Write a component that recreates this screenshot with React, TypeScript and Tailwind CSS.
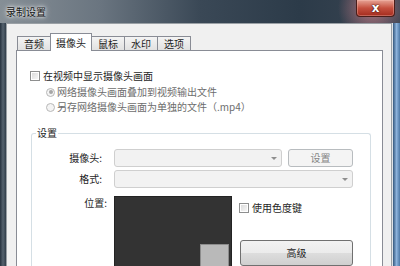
const font = "font-['Microsoft_YaHei','Noto_Sans_CJK_SC','Noto_Sans',sans-serif]";

function Checkbox() {
  return (
    <span className="flex h-[10px] w-[10px] shrink-0 items-center justify-center border border-[#8e8f8f] bg-white">
      <span className="h-[6px] w-[6px] bg-linear-to-br from-[#dcdcdc] to-[#f6f6f6]" />
    </span>
  );
}

function Radio({ checked }: { checked?: boolean }) {
  return (
    <span className="flex h-[9px] w-[9px] shrink-0 items-center justify-center rounded-full border border-[#b8b8b8] bg-[#f4f4f4]">
      {checked && <span className="h-[4px] w-[4px] rounded-full bg-[#a6a6a6]" />}
    </span>
  );
}

function Combo({ width }: { width: string }) {
  return (
    <div
      className={`flex h-[18px] ${width} items-center justify-end rounded-[3px] border border-[#cfcfcf] bg-[#f2f2f2] pr-[4px]`}
    >
      <span className="h-0 w-0 border-x-[3px] border-t-[3px] border-x-transparent border-t-[#8e8e8e]" />
    </div>
  );
}

const tabs = [
  { label: "音频", w: "w-[34px]" },
  { label: "摄像头", w: "w-[42px]", active: true },
  { label: "鼠标", w: "w-[34px]" },
  { label: "水印", w: "w-[34px]" },
  { label: "选项", w: "w-[34px]" },
];

export default function App() {
  return (
    <div className={`flex h-[266px] w-[400px] flex-col overflow-hidden text-[10px] leading-[14px] text-[#1e1e1e] ${font}`}>
      {/* title bar */}
      <div className="flex h-[23px] shrink-0 items-start justify-between bg-[radial-gradient(circle_at_372px_8px,rgba(214,130,140,0.75),rgba(214,130,140,0)_34px),linear-gradient(to_right,#868f96,#6a7580_25%,#3a4856_50%,#2c3b49_75%,#3a4552)]">
        <span className="mt-[5px] ml-[6px] text-[10px] text-[#151515] [text-shadow:0_0_6px_#ffffff,0_0_3px_#ffffff]">
          录制设置
        </span>
        <div className="mr-[5px] flex h-[17px] w-[39px] items-center justify-center rounded-b-[4px] border border-t-0 border-[#4a1e1a] bg-linear-to-b from-[#e6a396] via-[#c5503f] to-[#a32a1d] shadow-[inset_0_0_0_1px_rgba(255,200,190,0.35)]">
          <span className="text-[12px] font-bold leading-none text-white [text-shadow:0_0_1px_#3a1010,0_0_2px_#3a1010] font-['DejaVu_Sans',sans-serif]">
            x
          </span>
        </div>
      </div>

      <div className="flex min-h-0 flex-1">
        <div className="w-[6px] shrink-0 bg-linear-to-r from-[#26323e] via-[#56636f] to-[#303d49]" />

        <div className="flex min-w-0 flex-1 flex-col border-x border-t border-[#9aa0a5] bg-[#f0f0f0] pt-[9px] pr-[8px] pl-[9px]">
          {/* tabs */}
          <div className="relative z-10 flex h-[17px] items-end pl-[1px]">
            {tabs.map((t, i) =>
              t.active ? (
                <div
                  key={t.label}
                  className={`-mb-[1px] h-[18px] ${t.w} ${i > 0 ? "-ml-[1px]" : ""} z-10 flex items-start justify-center border-x border-t border-[#898c95] bg-white pt-[2px]`}
                >
                  {t.label}
                </div>
              ) : (
                <div
                  key={t.label}
                  className={`h-[14px] ${t.w} ${i > 0 ? "-ml-[1px]" : ""} flex items-center justify-center border-x border-t border-[#898c95] bg-linear-to-b from-[#f4f4f4] to-[#e1e1e1] text-[#1e1e1e]`}
                >
                  {t.label}
                </div>
              ),
            )}
          </div>

          {/* tab panel */}
          <div className="flex flex-1 flex-col border border-b-0 border-[#898c95] bg-white pt-[18px]">
            <label className="flex h-[14px] items-center gap-[3px] pl-[13px]">
              <Checkbox />
              <span>在视频中显示摄像头画面</span>
            </label>
            <div className="mt-[2px] flex h-[14px] items-center gap-[2px] pl-[29px] text-[#6d6d6d]">
              <Radio checked />
              <span>网络摄像头画面叠加到视频输出文件</span>
            </div>
            <div className="mt-[1px] flex h-[14px] items-center gap-[2px] pl-[29px] text-[#6d6d6d]">
              <Radio />
              <span>另存网络摄像头画面为单独的文件（.mp4）</span>
            </div>

            <fieldset className="mt-[12px] mr-[11px] ml-[14px] flex-1 rounded-[3px] border border-b-0 border-[#d5dfe5]">
              <legend className="ml-[4px] px-[1px] leading-[14px]">设置</legend>

              <div className="mt-[9px] flex items-center">
                <span className="w-[70px] text-right">摄像头:</span>
                <div className="ml-[12px]">
                  <Combo width="w-[168px]" />
                </div>
                <div className="ml-[6px] flex h-[18px] w-[65px] items-center justify-center rounded-[3px] border border-[#b8bcbf] bg-[#f4f4f4] text-[#848484]">
                  设置
                </div>
              </div>

              <div className="mt-[3px] flex items-center">
                <span className="w-[70px] text-right">格式:</span>
                <div className="ml-[12px]">
                  <Combo width="w-[239px]" />
                </div>
              </div>

              <div className="mt-[8px] flex items-start">
                <span className="w-[75px] text-right">位置:</span>
                <div className="ml-[7px] flex h-[80px] w-[118px] items-start justify-end border border-[#232323] bg-[#333333] pt-[47px] pr-[2px]">
                  <div className="h-[24px] w-[29px] border border-[#8c8c8c] bg-[#b9b9b9]" />
                </div>
                <div className="ml-[7px] flex flex-col">
                  <label className="mt-[5px] flex h-[14px] items-center gap-[3px]">
                    <Checkbox />
                    <span>使用色度键</span>
                  </label>
                  <div className="mt-[25px] ml-[1px] flex h-[26px] w-[113px] items-center justify-center rounded-[3px] border border-[#707070] bg-[linear-gradient(to_bottom,#f2f2f2,#ebebeb_50%,#dddddd_50%,#cfcfcf)] text-[#1e1e1e]">
                    高级
                  </div>
                </div>
              </div>
            </fieldset>
          </div>
        </div>

        <div className="w-[8px] shrink-0 border-l border-[#dfe3e7] bg-linear-to-r from-[#35597f] via-[#8cb2db] to-[#4c78a6]" />
      </div>
    </div>
  );
}
